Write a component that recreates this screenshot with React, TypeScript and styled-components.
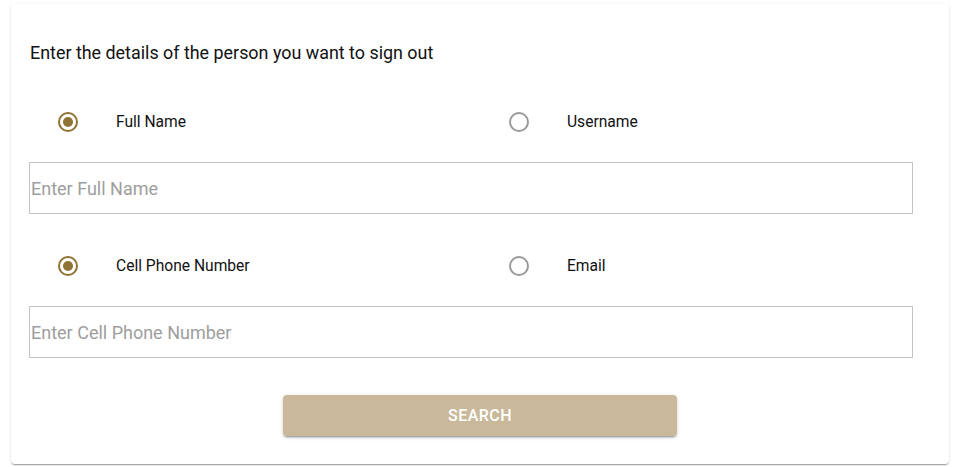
import React, { useState } from "react";
import styled, { createGlobalStyle } from "styled-components";

const GlobalStyle = createGlobalStyle`
  body {
    margin: 0;
    background: #ffffff;
    font-family: Roboto, "Liberation Sans", Arial, sans-serif;
  }
`;

const Page = styled.div`
  padding: 4px 8px 3px 11px;
`;

const Card = styled.div`
  background: #fff;
  border-radius: 4px;
  box-shadow: 0 2px 1px -1px rgba(0, 0, 0, 0.2), 0 1px 1px 0 rgba(0, 0, 0, 0.14),
    0 1px 3px 0 rgba(0, 0, 0, 0.12);
  padding: 37px 36px 28px 18px;
  height: 460px;
  box-sizing: border-box;
`;

const Title = styled.div`
  font-size: 17.9px;
  line-height: 24px;
  color: #111;
  padding-left: 1px;
  margin-bottom: 36px;
`;

const RadioRow = styled.div`
  display: grid;
  grid-template-columns: 451px 1fr;
  padding-left: 29px;
  height: 42px;
  margin-bottom: 19px;
`;

const Option = styled.label`
  display: flex;
  align-items: center;
  gap: 38px;
  font-size: 15.6px;
  color: #111;
  cursor: pointer;
`;

const Circle = styled.span<{ $on: boolean }>`
  width: 20px;
  height: 20px;
  box-sizing: border-box;
  border-radius: 50%;
  border: 2px solid ${(p) => (p.$on ? "#8f7235" : "#9a9a9a")};
  display: flex;
  align-items: center;
  justify-content: center;
  &::after {
    content: "";
    width: 10px;
    height: 10px;
    border-radius: 50%;
    background: #8f7235;
    display: ${(p) => (p.$on ? "block" : "none")};
  }
`;

const Field = styled.input<{ $last?: boolean }>`
  display: block;
  width: 884px;
  height: 52px;
  box-sizing: border-box;
  border: 1px solid #c4c4c4;
  padding: 0 0 0 1px;
  margin: 0 0 ${(p) => (p.$last ? "37px" : "31px")} 0;
  font-family: Roboto, "Liberation Sans", Arial, sans-serif;
  font-size: 18px;
  color: #333;
  outline: none;
  &::placeholder {
    color: #9e9e9e;
  }
`;

const ButtonRow = styled.div`
  display: flex;
  justify-content: center;
  padding-left: 18px;
`;

const SearchButton = styled.button`
  width: 394px;
  height: 41px;
  border: none;
  border-radius: 4px;
  background: #c9b99a;
  color: #fff;
  font-family: Roboto, "Liberation Sans", Arial, sans-serif;
  font-weight: 500;
  font-size: 16px;
  letter-spacing: 0.02857em;
  text-transform: uppercase;
  box-shadow: 0 3px 1px -2px rgba(0, 0, 0, 0.2), 0 2px 2px 0 rgba(0, 0, 0, 0.14),
    0 1px 5px 0 rgba(0, 0, 0, 0.12);
`;

type Choice = { left: string; right: string; placeholder: string };

const groups: Choice[] = [
  { left: "Full Name", right: "Username", placeholder: "Enter Full Name" },
  { left: "Cell Phone Number", right: "Email", placeholder: "Enter Cell Phone Number" },
];

const App = () => {
  const [picked, setPicked] = useState<string[]>(["Full Name", "Cell Phone Number"]);
  return (
    <Page>
      <GlobalStyle />
      <Card>
        <Title>Enter the details of the person you want to sign out</Title>
        {groups.map((g, i) => (
          <div key={g.left}>
            <RadioRow>
              {[g.left, g.right].map((opt) => (
                <Option
                  key={opt}
                  onClick={() => setPicked((p) => p.map((v, j) => (j === i ? opt : v)))}
                >
                  <Circle $on={picked[i] === opt} />
                  {opt}
                </Option>
              ))}
            </RadioRow>
            <Field
              $last={i === groups.length - 1}
              placeholder={picked[i] === g.left ? g.placeholder : `Enter ${picked[i]}`}
            />
          </div>
        ))}
        <ButtonRow>
          <SearchButton>Search</SearchButton>
        </ButtonRow>
      </Card>
    </Page>
  );
};

export default App;
